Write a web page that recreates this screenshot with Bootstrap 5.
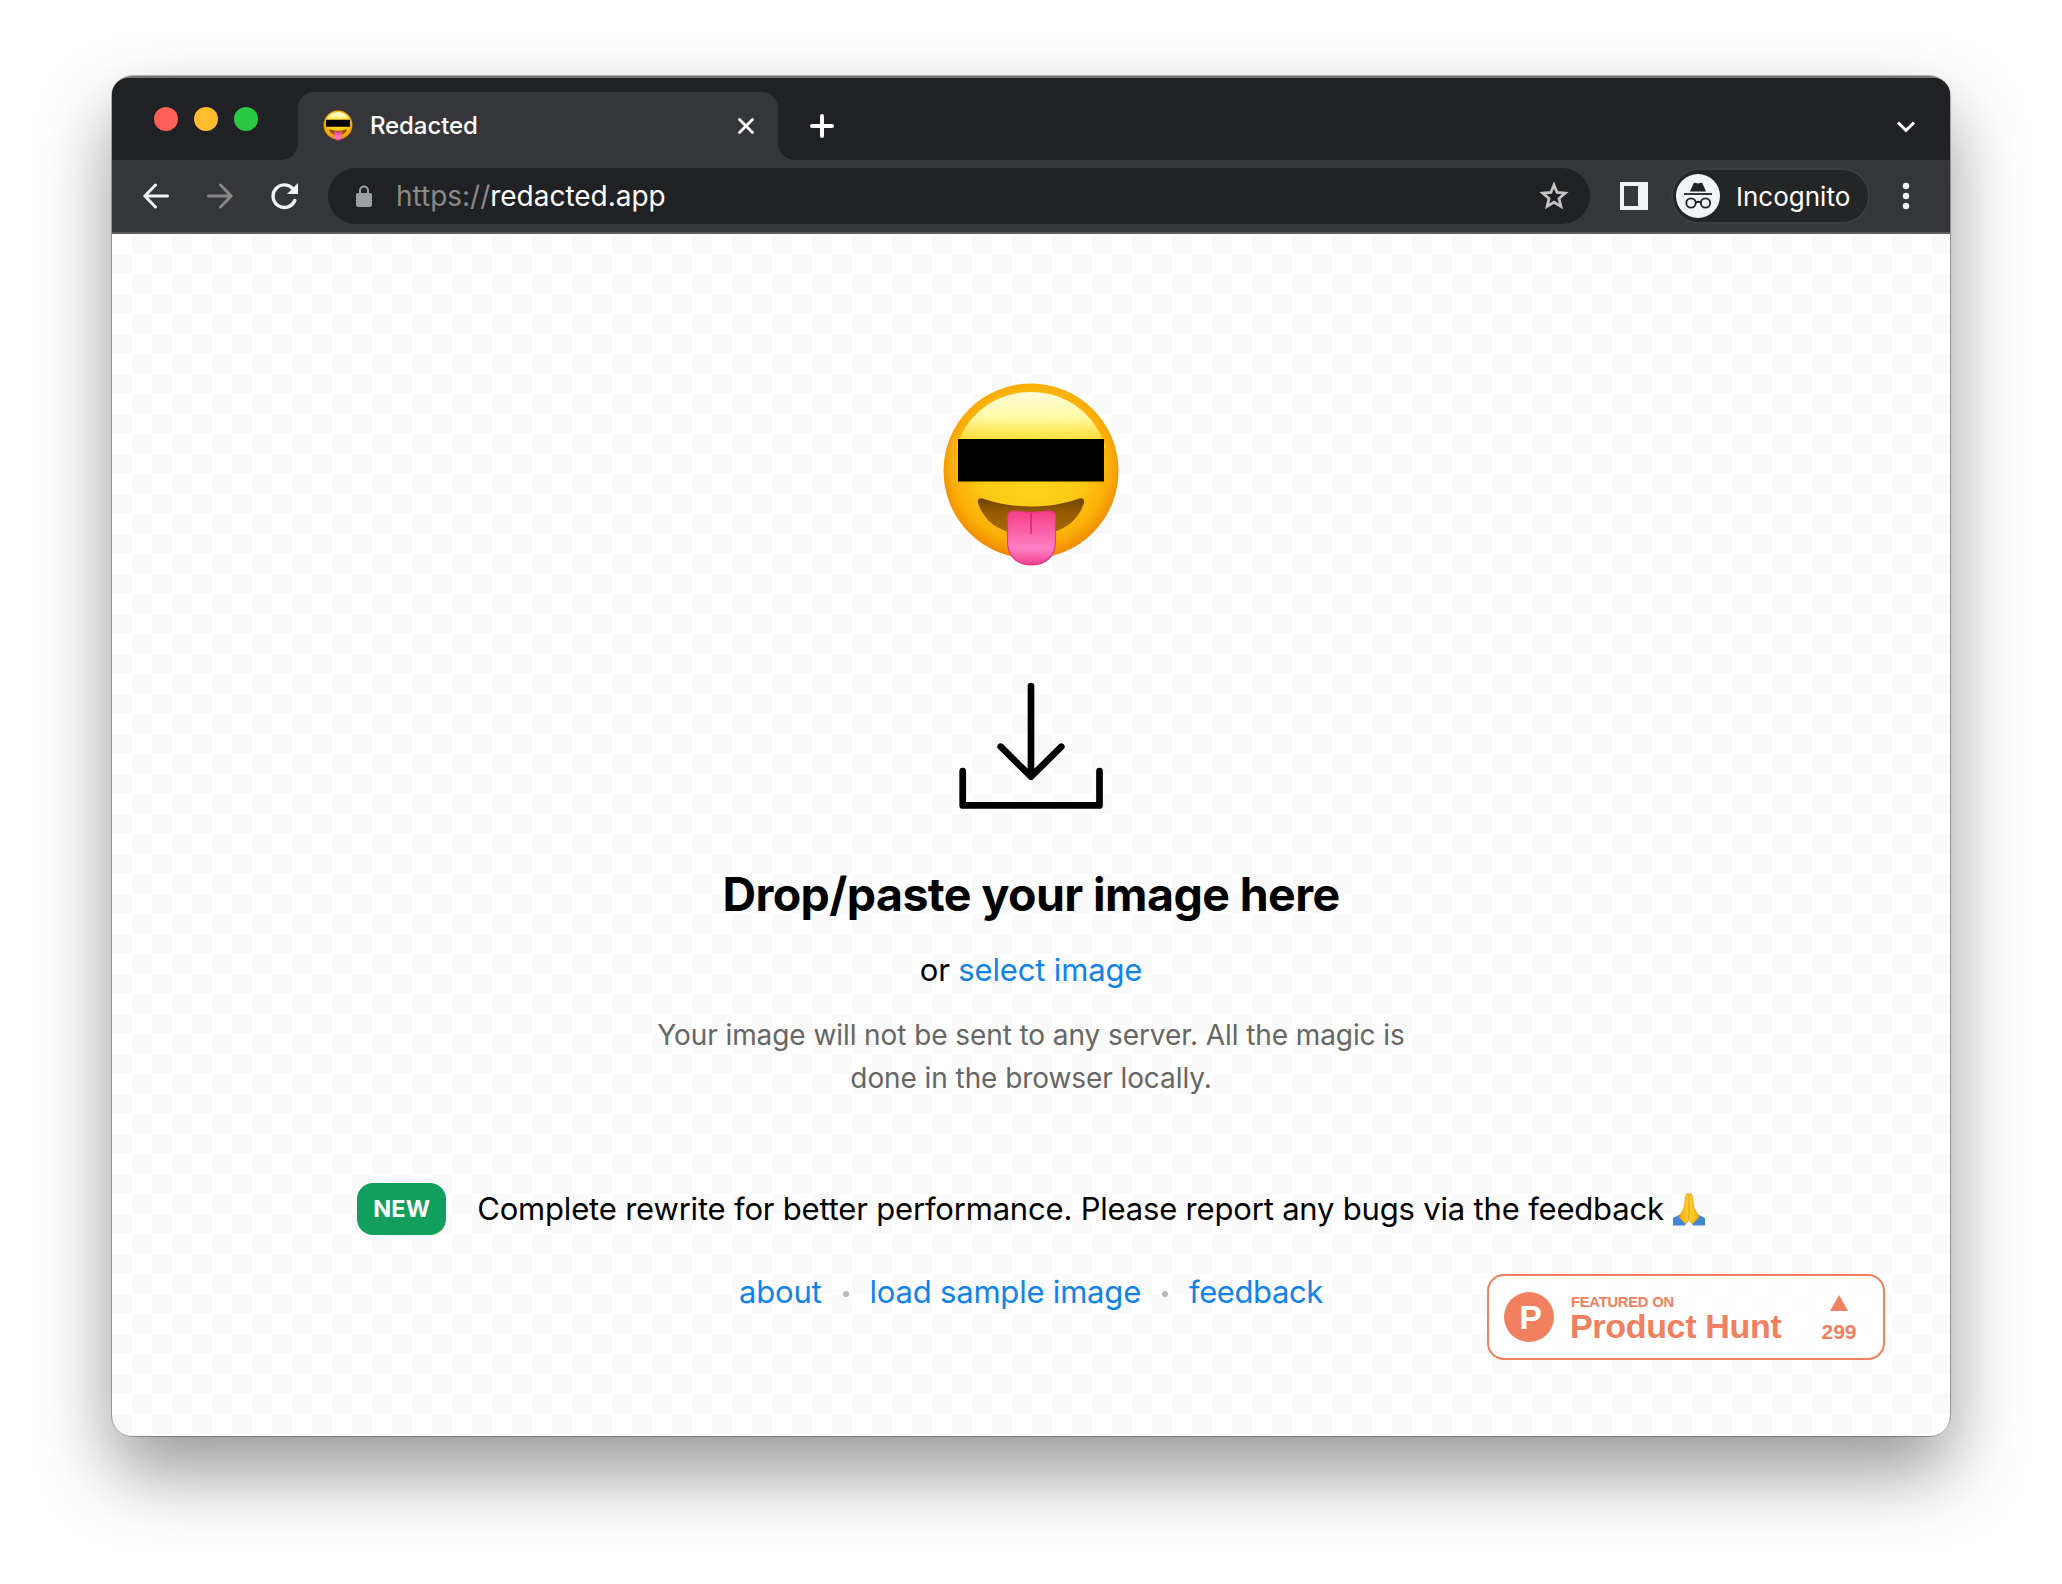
<!DOCTYPE html>
<html lang="en">
<head>
<meta charset="utf-8">
<title>Redacted</title>
<link href="https://cdn.jsdelivr.net/npm/bootstrap@5.3.0/dist/css/bootstrap.min.css" rel="stylesheet">
<style>
body{background:#fff;font-family:Inter,"Noto Sans",sans-serif;color:#000;overflow:hidden}
svg{display:block;flex:none}
.desk{padding:76px 112px 148px;height:1584px}
.win{height:1360px;border-radius:21px;background:#202124;box-shadow:0 0 0 1px rgba(0,0,0,.28),0 36px 74px rgba(0,0,0,.41);border-top:2px solid #717374}
.strip{height:82px;background:#202124}
.lights{padding:29px 0 0 42px;width:186px}
.light{width:24px;height:24px}
.tab-active{width:480px;height:68px;margin-top:14px;background:#35363a;border-radius:16px 16px 0 0;padding:0 24px 0 25px;color:#fff;font-size:24px;font-weight:500;letter-spacing:-.1px}
.tab-active::before,.tab-active::after{content:"";position:absolute;bottom:0;width:16px;height:16px}
.tab-active::before{left:-16px;background:radial-gradient(circle at 0 0,transparent 15.5px,#35363a 16px)}
.tab-active::after{right:-16px;background:radial-gradient(circle at 100% 0,transparent 15.5px,#35363a 16px)}
.tab-name{margin-left:17px}
.tools{height:74px;background:#35363a;border-bottom:2px solid #5b5c5f;padding-left:31px}
.g38{margin-left:38px}
.omni{width:1262px;height:56px;margin-left:30px;padding:0 21px 0 28px;background:#202124;font-size:28px;color:#fff}
.url{margin-left:24px;letter-spacing:-.02px}
.scheme{color:#8a8a8a}
.incog{width:199px;height:56px;margin-left:23px;padding-left:3px;background:#242527;border:2px solid #3c3d3f;font-size:26px;color:#fff}
.page-area{height:1202px;border-radius:0 0 20px 20px;background:#fff conic-gradient(#f9f9f9 25%,#fff 0 50%,#f9f9f9 0 75%,#fff 0) 0 0/40px 40px;padding-top:146px}
.drop-title{font-size:46.5px;line-height:60px;letter-spacing:-.58px;margin:54px 0 0;font-weight:700}
.drop-or{font-size:31px;line-height:48px;letter-spacing:-.15px;margin:22px 0 0}
.drop-note{font-size:28px;line-height:43px;letter-spacing:-.08px;color:#666;margin:20px 0 0;width:768px}
.blue{color:#1283e6;text-decoration:none}
.news{margin-top:83px;height:52px;font-size:31px;letter-spacing:-.185px}
.tag-new{width:89px;height:52px;border-radius:16px;background:#129e5d;color:#fff;font-size:23.5px;font-weight:700;letter-spacing:.1px;margin-right:31px}
.news-line{padding-top:1px}
.foot{margin-top:33px;font-size:31px;line-height:48px;letter-spacing:-.2px;gap:21px}
.sep{width:6px;height:6px;background:#b9b9b9;margin-top:4px}
.hunt{right:65px;bottom:76px;width:398px;height:86px;border:2px solid #f08060;border-radius:17px;background:rgba(255,255,255,.8);color:#f08060;font-family:"Liberation Sans",sans-serif;font-weight:700;padding-left:15px}
.hunt-p{width:50px;height:50px;background:#f08060;color:#fff;font-size:34px;line-height:51px;padding-left:3px}
.hunt-txt{margin-left:16px;padding-top:19px;width:212px}
.hunt-a{font-size:14.7px;line-height:14px;letter-spacing:-.2px;padding-left:1px}
.hunt-b{font-size:34px;line-height:34px;letter-spacing:-.33px;white-space:nowrap}
.hunt-c{margin-left:37px;padding-top:19px;width:40px;font-size:21px}
.hunt-n{line-height:24px;margin-top:9px}
</style>
</head>
<body>
<svg width="0" height="0" class="position-absolute">
<defs>
<radialGradient id="face" gradientUnits="userSpaceOnUse" cx="91" cy="84" r="97"><stop offset="0" stop-color="#ffd91c"/><stop offset=".55" stop-color="#fdca14"/><stop offset=".82" stop-color="#fbae08"/><stop offset="1" stop-color="#ee8200"/></radialGradient>
<linearGradient id="shine" x1="0" y1="0" x2="0" y2="1"><stop offset="0" stop-color="#fffbd8"/><stop offset=".45" stop-color="#fffaa8"/><stop offset="1" stop-color="#ffec3c" stop-opacity=".45"/></linearGradient>
<linearGradient id="tongue" x1="0" y1="0" x2="0" y2="1"><stop offset="0" stop-color="#f63d83"/><stop offset=".3" stop-color="#fb5ba3"/><stop offset=".7" stop-color="#ff7fc6"/><stop offset="1" stop-color="#f33f8f"/></linearGradient>
<linearGradient id="mouth" x1="0" y1="0" x2="0" y2="1"><stop offset="0" stop-color="#6d4200"/><stop offset=".4" stop-color="#965c00"/><stop offset="1" stop-color="#a86900"/></linearGradient>
<linearGradient id="hand" x1="0" y1="0" x2="1" y2="0"><stop offset="0" stop-color="#f5a800"/><stop offset=".5" stop-color="#ffd52e"/><stop offset="1" stop-color="#f8b20a"/></linearGradient>
<symbol id="emoji" viewBox="0 0 182 190">
<circle cx="91" cy="91" r="87.500" fill="url(#face)"/>
<path d="M16 68C27 33 56 12 91 12s64 21 75 56z" fill="url(#shine)"/>
<path d="M38 123c-1-4 2-6 6-4 29 10 65 10 94 0 4-2 7 0 6 4-6 19-23 32-53 32s-47-13-53-32z" fill="url(#mouth)"/>
<path d="M67.500 137c0-6 5-7 11-5.500 8 1 17 1 25 0 6-1.500 12-.500 12 5.500v25c0 14-10 23-24 23s-24-9-24-23z" fill="url(#tongue)" stroke="#e9357c" stroke-width="1.200"/>
<path d="M91 133v21" stroke="#c92563" stroke-width="1.300"/>
<path d="M18 59h146v42.500H18z"/>
</symbol>
</defs>
</svg>
<main class="desk">
<div class="win">
<header class="strip d-flex rounded-top-4">
<div class="lights d-flex gap-3">
<span class="light rounded-circle" style="background:#ff5f57"></span><span class="light rounded-circle" style="background:#ffbd2e"></span><span class="light rounded-circle" style="background:#28c840"></span>
</div>
<div class="tab-active position-relative d-flex align-items-center">
<svg width="30" height="31.300"><use href="#emoji"/></svg>
<span class="tab-name">Redacted</span>
<svg class="ms-auto" width="16" height="16" stroke="#fff" stroke-width="2.800" stroke-linecap="round"><path d="M1.500 1.500l13 13M14.500 1.500l-13 13"/></svg>
</div>
<svg width="24" height="24" style="margin:36px 0 0 32px" stroke="#fff" stroke-width="4" stroke-linecap="round"><path d="M12 2v20M2 12h20"/></svg>
<svg class="ms-auto" width="20" height="14" style="margin:42px 34px 0 0" fill="none" stroke="#fff" stroke-width="3"><path d="M2 2.500l8 8 8-8"/></svg>
</header>
<nav class="tools d-flex align-items-center">
<svg width="26" height="26" fill="none" stroke="#f1f3f4" stroke-width="3" stroke-linecap="round" stroke-linejoin="round"><path d="M24.500 13H2M12.500 2L1.800 13l10.700 11"/></svg>
<svg class="g38" width="26" height="26" fill="none" stroke="#878787" stroke-width="3" stroke-linecap="round" stroke-linejoin="round"><path d="M1.500 13H24M13.500 2l10.700 11-10.700 11"/></svg>
<svg class="g38" width="27" height="28" fill="none"><path d="M21.500 6.300A11.300 11.300 0 1 0 23.800 18.500" stroke="#f1f3f4" stroke-width="3.400" stroke-linecap="round"/><path d="M27 1v11H16z" fill="#f1f3f4"/></svg>
<div class="omni rounded-pill d-flex align-items-center">
<svg width="16" height="22" fill="#9aa0a6"><rect y="8" width="16" height="14" rx="2"/><path d="M4 9V5.500a4 4 0 0 1 8 0V9" fill="none" stroke="#9aa0a6" stroke-width="2"/></svg>
<span class="url"><span class="scheme">https://</span>redacted.app</span>
<svg class="ms-auto" width="30" height="30" fill="none" stroke="#c3c3c4" stroke-width="2.800"><path d="M15 4l3.100 7.500 8.100.700-6.200 5.300 1.900 7.900L15 21.200l-6.900 4.200L10 17.500l-6.200-5.300 8.100-.700z"/></svg>
</div>
<svg width="28" height="28" style="margin-left:30px" fill="#f1f3f4"><path fill-rule="evenodd" d="M0 0h28v28H0zM4 4v20h14V4z"/></svg>
<div class="incog rounded-pill d-flex align-items-center">
<svg width="44" height="44"><circle cx="22" cy="22" r="22" fill="#f1f3f4"/><path d="M14 17.500l3.500-8q.4-1 1.500-.700l3 .700 3-.700q1.100-.300 1.500.700l3.500 8z" fill="#202124"/><path d="M8 20h28" stroke="#202124" stroke-width="1.800"/><g fill="none" stroke="#202124" stroke-width="1.800"><circle cx="15" cy="29" r="4.700"/><circle cx="29.500" cy="29" r="4.700"/><path d="M19.700 28.500q2.500-1.500 5 0"/></g></svg>
<span class="ms-3">Incognito</span>
</div>
<svg width="8" height="28" style="margin-left:32px" fill="#f1f3f4"><circle cx="4" cy="4" r="3.200"/><circle cx="4" cy="14" r="3.200"/><circle cx="4" cy="24" r="3.200"/></svg>
</nav>
<section class="page-area position-relative d-flex flex-column align-items-center text-center">
<svg width="182" height="190"><use href="#emoji"/></svg>
<svg width="150" height="130" style="margin-top:110px" fill="none" stroke="#000" stroke-width="6.700" stroke-linecap="round" stroke-linejoin="round"><path d="M75 6v90M44.700 66.700L75 96.700l30.300-30M6.700 91.200v34.200h136.800V91.200"/></svg>
<h1 class="drop-title">Drop/paste your image here</h1>
<p class="drop-or">or <a class="blue" href="#">select image</a></p>
<p class="drop-note">Your image will not be sent to any server. All the magic is done in the browser locally.</p>
<div class="news d-flex align-items-center">
<span class="tag-new d-flex align-items-center justify-content-center">NEW</span>
<span class="news-line">Complete rewrite for better performance. Please report any bugs via the feedback</span>
<svg width="32" height="33" style="margin-left:9px"><path d="M0 25l8-4 7 6-3 5.500H0zM32 25l-8-4-7 6 3 5.500h12z" fill="#3f86d6"/><path d="M15.700 1q-2-1.500-2.800 1.500L11 15l-5 9 6 6.500q3.500-1 3.700-4.500zM16.300 1q2-1.500 2.800 1.500L21 15l5 9-6 6.500q-3.500-1-3.700-4.500z" fill="url(#hand)" stroke="#e79a00" stroke-width=".700"/></svg>
</div>
<div class="foot d-flex align-items-center">
<a class="blue" href="#">about</a><span class="sep rounded-circle"></span><a class="blue" href="#">load sample image</a><span class="sep rounded-circle"></span><a class="blue" href="#" style="letter-spacing:-.4px">feedback</a>
</div>
<aside class="hunt position-absolute d-flex text-start">
<div class="hunt-p rounded-circle text-center align-self-center">P</div>
<div class="hunt-txt"><div class="hunt-a">FEATURED ON</div><div class="hunt-b">Product Hunt</div></div>
<div class="hunt-c d-flex flex-column align-items-center"><svg width="18" height="16" fill="#f08060"><path d="M9 0l9 16H0z"/></svg><span class="hunt-n">299</span></div>
</aside>
</section>
</div>
</main>
<script src="https://cdn.jsdelivr.net/npm/bootstrap@5.3.0/dist/js/bootstrap.bundle.min.js"></script>
</body>
</html>
